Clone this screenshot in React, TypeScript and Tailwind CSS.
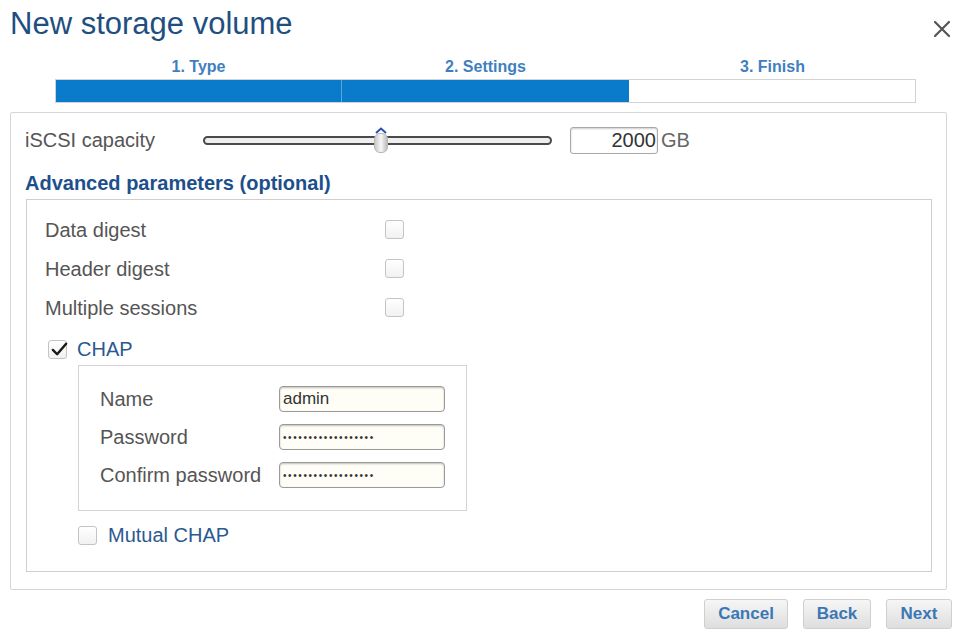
import React from 'react';

const font = { fontFamily: '"Liberation Sans", Arial, sans-serif' };

const Check: React.FC<{ checked?: boolean; className?: string }> = ({ checked, className = '' }) => (
  <span
    className={`relative inline-block w-[19px] h-[19px] rounded-[3px] border border-[#c4c4c4] bg-gradient-to-b from-white to-[#f1f1f1] ${className}`}
  >
    {checked && (
      <svg viewBox="0 0 20 20" className="absolute left-[1px] top-[-1px] w-[19px] h-[19px]">
        <path d="M3 10.5 L7.5 15 L17 4" fill="none" stroke="#1a1a1a" strokeWidth="2.6" strokeLinecap="round" strokeLinejoin="round" />
      </svg>
    )}
  </span>
);

const Field: React.FC<{ label: string; value: string; secret?: boolean }> = ({ label, value, secret }) => (
  <div className="flex items-center h-[38px]">
    <span className="w-[179px] text-[20px] leading-[24px] text-[#555]">{label}</span>
    <div
      className={`w-[166px] h-[26px] rounded-[4px] border border-[#9a9a9a] bg-[#fffef6] shadow-[inset_0_1px_2px_rgba(0,0,0,0.25)] flex items-center px-[3px] text-[#333] ${
        secret ? 'text-[10px] tracking-[1.6px]' : 'text-[17px]'
      }`}
    >
      {value}
    </div>
  </div>
);

const Button: React.FC<{ label: string; w: string }> = ({ label, w }) => (
  <button
    className={`${w} h-[30px] rounded-[3px] border border-[#cfcfcf] bg-gradient-to-b from-[#f6f6f6] to-[#dedede] text-[17px] font-bold text-[#3a78b5]`}
  >
    {label}
  </button>
);

const App: React.FC = () => {
  const dots = '••••••••••••••••••';
  return (
    <div className="w-[957px] h-[634px] bg-white relative overflow-hidden" style={font}>
      {/* header */}
      <div className="flex items-start justify-between pl-[10px] pr-[4px] pt-[5px] h-[56px]">
        <h1 className="text-[31px] leading-[38px] text-[#1f4f80]">New storage volume</h1>
        <svg viewBox="0 0 20 20" className="w-[20px] h-[20px] mt-[14px] mr-[1px]">
          <path d="M3 3 L17 17 M17 3 L3 17" stroke="#555" strokeWidth="2.2" strokeLinecap="round" />
        </svg>
      </div>

      {/* steps */}
      <div className="ml-[55px] w-[861px]">
        <div className="grid grid-cols-3 text-center text-[16px] font-bold text-[#3f7fbf] leading-[22px]">
          <span>1. Type</span>
          <span>2. Settings</span>
          <span>3. Finish</span>
        </div>
        <div className="mt-[1px] h-[24px] grid grid-cols-3 border border-[#d2d2d2] bg-white">
          <div className="bg-[#0a7bcb] border-r border-[#5aa6dc]" />
          <div className="bg-[#0a7bcb]" />
          <div />
        </div>
      </div>

      {/* main panel */}
      <div className="mx-[10px] mt-[9px] h-[478px] border border-[#d6d6d6] rounded-[2px] px-[14px] pt-[13px]">
        <div className="flex items-center h-[28px]">
          <span className="w-[178px] text-[20px] text-[#555]">iSCSI capacity</span>
          <div className="relative w-[349px] h-[9px] mr-[18px] rounded-full border-2 border-[#4a4a4a] bg-[#eeeeee]">
            <div className="absolute left-[169px] top-[-11px] flex flex-col items-center">
              <svg viewBox="0 0 12 7" className="w-[12px] h-[7px]">
                <path d="M1 6 L6 1.5 L11 6" fill="none" stroke="#2b4fb0" strokeWidth="2" />
              </svg>
              <div className="w-[14px] h-[20px] -mt-[1px] rounded-[6px] border border-[#b8b8b8] bg-gradient-to-r from-[#c9c9c9] via-[#f7f7f7] to-[#bdbdbd]" />
            </div>
          </div>
          <div className="w-[88px] h-[27px] rounded-[3px] border border-[#a8a8a8] shadow-[inset_0_1px_2px_rgba(0,0,0,0.2)] text-right pr-[1px] text-[20px] leading-[25px] text-[#333]">
            2000
          </div>
          <span className="ml-[3px] text-[20px] text-[#666]">GB</span>
        </div>

        <h2 className="mt-[18px] text-[20px] font-bold text-[#1d4f8c] leading-[22px]">Advanced parameters (optional)</h2>

        <div className="mt-[5px] ml-[1px] h-[373px] border border-[#cfcfcf] pl-[18px] pt-[10px]">
          {['Data digest', 'Header digest', 'Multiple sessions'].map((t) => (
            <div key={t} className="flex items-center h-[39px]">
              <span className="w-[340px] text-[20px] leading-[24px] text-[#555]">{t}</span>
              <Check />
            </div>
          ))}

          <div className="flex items-center mt-[8px] ml-[3px] h-[28px]">
            <Check checked />
            <span className="ml-[10px] text-[20px] text-[#2a5a8f]">CHAP</span>
          </div>

          <div className="ml-[33px] mt-[2px] w-[389px] h-[146px] border border-[#d4d4d4] pl-[21px] pt-[14px]">
            <Field label="Name" value="admin" />
            <Field label="Password" value={dots} secret />
            <Field label="Confirm password" value={dots} secret />
          </div>

          <div className="flex items-center ml-[33px] mt-[9px]">
            <Check />
            <span className="ml-[11px] text-[20px] text-[#2a5a8f]">Mutual CHAP</span>
          </div>
        </div>
      </div>

      {/* footer buttons */}
      <div className="flex justify-end gap-[15px] pr-[5px] mt-[9px]">
        <Button label="Cancel" w="w-[84px]" />
        <Button label="Back" w="w-[68px]" />
        <Button label="Next" w="w-[66px]" />
      </div>
    </div>
  );
};

export default App;
